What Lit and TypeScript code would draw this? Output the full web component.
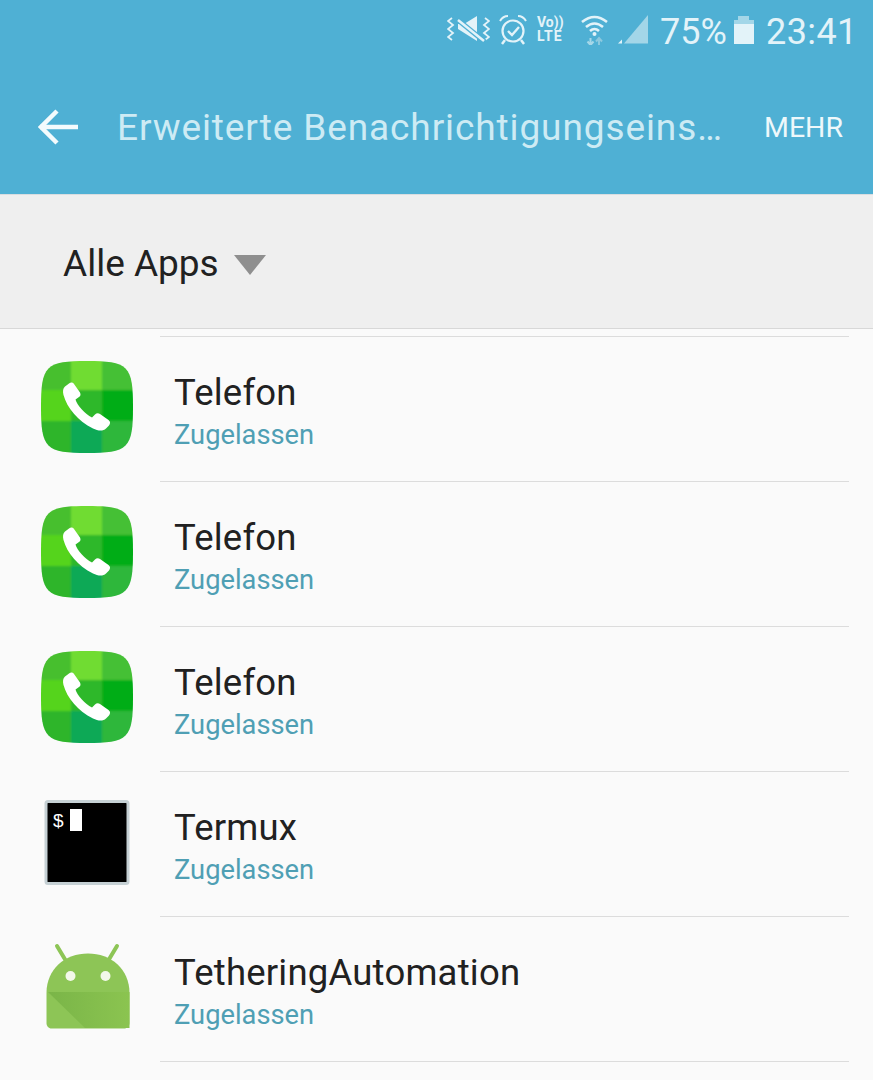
import { LitElement, html, css } from "lit";
import { customElement } from "lit/decorators.js";

const phoneIcon = html`<svg class="icon" viewBox="0 0 92 92">
  <defs>
    <clipPath id="sq"><path d="M46 0C66 0 78 1 84.500 7.500C91 14 92 26 92 46C92 66 91 78 84.500 84.500C78 91 66 92 46 92C26 92 14 91 7.500 84.500C1 78 0 66 0 46C0 26 1 14 7.500 7.500C14 1 26 0 46 0Z"/></clipPath>
    <filter id="soft" x="-5%" y="-5%" width="110%" height="110%"><feGaussianBlur stdDeviation="0.800"/></filter>
  </defs>
  <g clip-path="url(#sq)">
    <g filter="url(#soft)">
      <rect x="-4" y="-4" width="100" height="100" fill="#3cc02c"/>
      <rect x="-4" y="-4" width="34" height="33" fill="#47bf2f"/>
      <rect x="30" y="-4" width="31" height="33" fill="#6fdc30"/>
      <rect x="61" y="-4" width="35" height="33" fill="#45c034"/>
      <rect x="-4" y="29" width="34" height="31" fill="#55d41e"/>
      <rect x="30" y="29" width="31" height="31" fill="#2fb82a"/>
      <rect x="61" y="29" width="35" height="31" fill="#05ad14"/>
      <rect x="-4" y="60" width="34" height="36" fill="#2db52a"/>
      <rect x="30" y="60" width="31" height="36" fill="#0fa956"/>
      <rect x="61" y="60" width="35" height="36" fill="#2eb73a"/>
    </g>
  </g>
  <path fill="#fff" d="M28 22.500C30 21 32 21.500 33 23L39 31.500C40 33.500 39.500 35 38 36L34.500 38.500C36 44 44 53 51 56.500L54 53.500C55.500 52 57.500 52 59 53L67.500 59C69.500 60.500 69.500 62.500 68 64.500L65 67.500C62 70.500 57 70 52 67.500C37 60 26 47 22.500 34C21.500 30 22 27.500 24 25.500Z"/>
</svg>`;

const termuxIcon = html`<svg class="icon" viewBox="0 0 92 92">
  <rect x="5" y="5.500" width="82" height="82" rx="2" fill="#000" stroke="#c5d0d4" stroke-width="3"/>
  <text x="12" y="31" class="dollar">$</text>
  <rect x="29" y="13" width="12" height="22" fill="#fff"/>
</svg>`;

const androidIcon = html`<svg class="icon" viewBox="0 0 92 92">
  <defs>
    <linearGradient id="fold" x1="0" y1="0" x2="1" y2="0">
      <stop offset="0" stop-color="#7ab548"/>
      <stop offset="1" stop-color="#8bc450"/>
    </linearGradient>
  </defs>
  <path d="M16 5L25 20M76 5L67 20" stroke="#8dc556" stroke-width="4" stroke-linecap="round"/>
  <path fill="#8dc556" d="M5.500 52C5.500 28 24 12.500 47 12.500S88.500 28 88.500 52V82C88.500 85 86 87.500 83 87.500H10.500C7.500 87.500 5.500 85 5.500 82Z"/>
  <path fill="url(#fold)" d="M7 51H88.500V87H44Z"/>
  <circle cx="29.500" cy="35" r="5" fill="#f3f8ea"/>
  <circle cx="64.500" cy="35" r="5" fill="#f3f8ea"/>
</svg>`;

const apps = [
  { name: "Telefon", icon: phoneIcon },
  { name: "Telefon", icon: phoneIcon },
  { name: "Telefon", icon: phoneIcon },
  { name: "Termux", icon: termuxIcon },
  { name: "TetheringAutomation", icon: androidIcon },
];

const C = "#e3f3f9";

@customElement("app-root")
export class AppRoot extends LitElement {
  static styles = css`
    :host { display: block; width: 873px; height: 1080px; overflow: hidden; background: #fafafa; font-family: Roboto, "Liberation Sans", sans-serif; color: #212121; }
    .appbar { height: 194px; background: #4fb0d4; box-sizing: border-box; }
    .status { height: 63px; display: flex; align-items: flex-start; padding: 15px 0 0 447px; box-sizing: border-box; color: #e3f3f9; }
    .status svg { display: block; flex: none; }
    .s1 { width: 43px; height: 28px; margin-right: 9px; }
    .s2 { width: 28px; height: 30px; margin-right: 10px; }
    .volte { width: 28px; height: 28px; margin-right: 16px; display: flex; flex-direction: column; font-size: 14px; line-height: 14px; font-weight: 700; align-items: flex-start; }
    .lte { letter-spacing: 1px; }
    .s3 { width: 27px; height: 30px; margin-right: 10px; }
    .s4 { width: 30px; height: 30px; margin-right: 12px; }
    .pct { font-size: 36px; line-height: 34px; width: 65px; flex: none; margin-right: 9px; white-space: nowrap; }
    .s5 { width: 20px; height: 30px; margin-right: 12px; }
    .clock { font-size: 36px; line-height: 34px; letter-spacing: 0.4px; white-space: nowrap; flex: none; }
    .toolbar { height: 131px; display: flex; align-items: flex-start; }
    .back { width: 40px; height: 36px; margin: 46px 0 0 38px; flex: none; }
    .title { margin: 44px 0 0 39px; width: 610px; font-size: 37px; line-height: 42px; color: #cdebf4; white-space: nowrap; overflow: hidden; letter-spacing: 0.9px; }
    .more { margin: 49px 0 0 37px; font-size: 28.500px; line-height: 32px; color: #eef8fb; white-space: nowrap; }
    .filter { height: 135px; background: #efefef; border-top: 1px solid #d9dde0; border-bottom: 1px solid #d8d8d8; box-sizing: border-box; display: flex; align-items: center; padding: 0 0 0 63px; gap: 15px; }
    .filter-label { font-size: 37px; line-height: 42px; margin-top: 5px; }
    .caret { width: 32px; height: 20px; flex: none; margin-top: 6px; }
    .list { padding-top: 7px; }
    .top-rule { height: 1px; margin: 0 24px 0 160px; background: #dcdcdc; }
    .row { height: 145px; display: flex; box-sizing: border-box; }
    .icon-cell { width: 160px; flex: none; padding: 24px 0 0 41px; box-sizing: border-box; }
    .icon { width: 92px; height: 92px; display: block; }
    .dollar { font-family: "Liberation Sans", sans-serif; font-size: 19px; fill: #fff; }
    .body { flex: 1; margin-right: 24px; border-bottom: 1px solid #dcdcdc; padding: 35px 0 0 14px; }
    .name { font-size: 36.500px; line-height: 42px; letter-spacing: 0.2px; color: #212121; }
    .sub { font-size: 27.300px; line-height: 32px; margin-top: 5px; color: #4f9fb4; }
  `;

  render() {
    return html`
      <div class="appbar">
        <div class="status">
          <svg class="s1" viewBox="0 0 43 28" fill="none" stroke="${C}">
            <path d="M5 3L1 6L6 10L1 14L6 18L1 22L5 25" stroke-width="1.800"/>
            <path d="M38 3L42 6L37 10L42 14L37 18L42 22L38 25" stroke-width="1.800"/>
            <path fill="${C}" stroke="none" d="M11 9H17L30 1V26L11 14Z"/>
            <path d="M11 5L38 27" stroke="#4fb0d4" stroke-width="5"/>
            <path d="M11 5L37 26" stroke-width="2.500"/>
          </svg>
          <svg class="s2" viewBox="0 0 28 30" fill="none" stroke="${C}" stroke-width="2">
            <circle cx="14" cy="16" r="10.500" stroke-width="2.200"/>
            <path d="M9 16L13 20L20 12" stroke-width="2.400"/>
            <path d="M1 6Q4 1 9 1M27 6Q24 1 19 1"/>
            <path d="M6 25L3 29M22 25L25 29" stroke-width="2.500"/>
          </svg>
          <div class="volte"><span>Vo))</span><span class="lte">LTE</span></div>
          <svg class="s3" viewBox="0 0 27 30" fill="none" stroke="${C}" stroke-width="2.600">
            <path d="M1 7Q13.500 -3 26 7"/>
            <path d="M5 12Q13.500 5 22 12"/>
            <path d="M9 16Q13.500 12 18 16"/>
            <circle cx="13.500" cy="19" r="2" fill="${C}" stroke="none"/>
            <path d="M9.500 23V30M6.500 26.500L9.500 30L12.500 26.500" stroke="#a6d7e8" stroke-width="2"/>
            <path d="M18 30V23M15 26.500L18 23L21 26.500" stroke="#8cc9df" stroke-width="2"/>
          </svg>
          <svg class="s4" viewBox="0 0 30 30">
            <path fill="#a3d6e8" d="M6 28.500L30 0V28.500Z"/>
            <path fill="${C}" d="M0 28.500L4 24.500V28.500Z"/>
          </svg>
          <div class="pct">75%</div>
          <svg class="s5" viewBox="0 0 20 30">
            <path fill="#a3d6e8" d="M4 1H15V5H20V10H0V5H4Z"/>
            <path fill="${C}" d="M0 9H20V29H0Z"/>
          </svg>
          <div class="clock">23:41</div>
        </div>
        <div class="toolbar">
          <svg class="back" viewBox="0 0 40 36" fill="none" stroke="#f4fbfd" stroke-width="4.500">
            <path d="M2 18H40"/><path d="M19 2L3 18L19 34"/>
          </svg>
          <div class="title">Erweiterte Benachrichtigungseins…</div>
          <div class="more">MEHR</div>
        </div>
      </div>
      <div class="filter">
        <div class="filter-label">Alle Apps</div>
        <svg class="caret" viewBox="0 0 32 20"><path d="M0 0H32L16 20Z" fill="#8f8f8f"/></svg>
      </div>
      <div class="list">
        <div class="top-rule"></div>
        ${apps.map(
          (a) => html`<div class="row">
            <div class="icon-cell">${a.icon}</div>
            <div class="body">
              <div class="name">${a.name}</div>
              <div class="sub">Zugelassen</div>
            </div>
          </div>`
        )}
      </div>
    `;
  }
}
